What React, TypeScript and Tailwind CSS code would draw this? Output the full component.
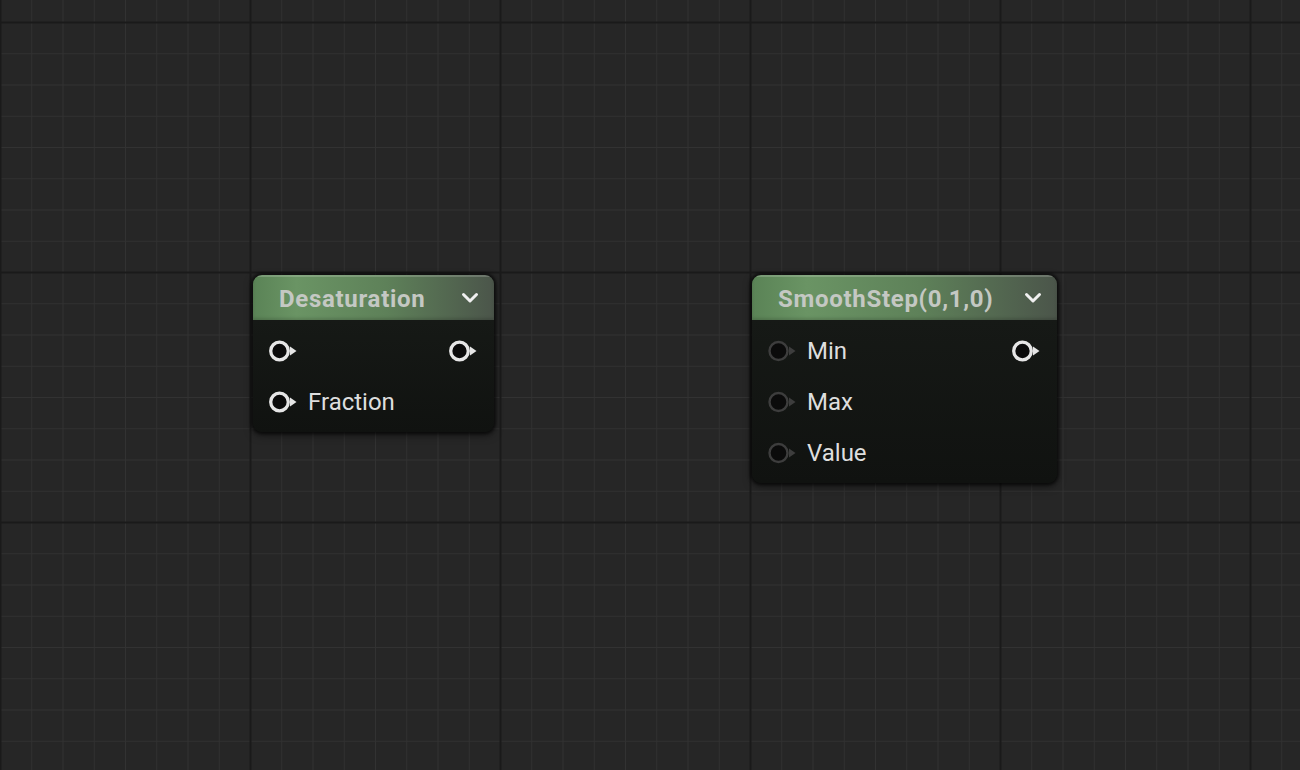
import React from 'react';

type Pin = { label?: string; dim?: boolean };

type NodeDef = {
  title: string;
  left: number;
  top: number;
  width: number;
  rows: { input: Pin; output?: Pin }[];
};

const nodes: NodeDef[] = [
  {
    title: 'Desaturation',
    left: 253,
    top: 275,
    width: 241,
    rows: [{ input: {}, output: {} }, { input: { label: 'Fraction' } }],
  },
  {
    title: 'SmoothStep(0,1,0)',
    left: 752,
    top: 275,
    width: 305,
    rows: [
      { input: { label: 'Min', dim: true }, output: {} },
      { input: { label: 'Max', dim: true } },
      { input: { label: 'Value', dim: true } },
    ],
  },
];

function Grid() {
  const minor = 31.25;
  const vx: number[] = [];
  for (let k = 0; k * minor <= 1300; k++) vx.push(k);
  const hy: number[] = [];
  for (let k = -1; 22 + k * minor <= 770; k++) hy.push(k);
  return (
    <svg className="absolute inset-0" width="1300" height="770">
      <rect width="1300" height="770" fill="#262626" />
      {vx.map((k) =>
        k % 8 === 0 ? null : (
          <rect key={'v' + k} x={k * minor} y={0} width={1} height={770} fill="#323232" />
        ),
      )}
      {hy.map((k) =>
        k % 8 === 0 ? null : (
          <rect key={'h' + k} x={0} y={22 + k * minor} width={1300} height={1} fill="#323232" />
        ),
      )}
      {vx
        .filter((k) => k % 8 === 0)
        .map((k) => (
          <rect key={'V' + k} x={k * minor - 0.5} y={0} width={2} height={770} fill="#1a1a1a" />
        ))}
      {hy
        .filter((k) => k % 8 === 0)
        .map((k) => (
          <rect key={'H' + k} x={0} y={21.5 + k * minor} width={1300} height={2} fill="#1a1a1a" />
        ))}
    </svg>
  );
}

function PinIcon({ dim }: { dim?: boolean }) {
  const c = dim ? '#3d3d3d' : '#e6e6e6';
  return (
    <svg width="30" height="24" viewBox="0 0 30 24" className="shrink-0">
      <circle cx="11.5" cy="12" r={dim ? 9 : 8.8} fill="#0b0b0b" stroke={c} strokeWidth={dim ? 2.4 : 3.3} />
      <path d="M22 7.5 L28.5 12 L22 16.5 Z" fill={c} />
    </svg>
  );
}

function Chevron() {
  return (
    <svg width="18" height="12" viewBox="0 0 18 12">
      <path d="M2.5 2.5 L9 9 L15.5 2.5" fill="none" stroke="#f0f0f0" strokeWidth="3" strokeLinecap="round" strokeLinejoin="round" />
    </svg>
  );
}

function GraphNode({ node }: { node: NodeDef }) {
  return (
    <div
      className="absolute rounded-[9px] bg-[#111311] shadow-[0_0_3px_2px_rgba(0,0,0,0.55),0_3px_8px_rgba(0,0,0,0.5)] overflow-hidden"
      style={{ left: node.left, top: node.top, width: node.width }}
    >
      <div className="relative h-[45px] flex items-center justify-between pl-[26px] pr-[15px] bg-[linear-gradient(90deg,#5a8356_0%,#6a9464_18%,#5e8159_55%,#4b554a_100%)] shadow-[inset_0_2px_0_rgba(255,255,255,0.18),inset_0_-2px_3px_rgba(0,0,0,0.15)]">
        <span className="text-[24px] font-bold leading-none text-[#c4c8c3] tracking-[0.7px] pt-[3px]">{node.title}</span>
        <Chevron />
      </div>
      <div className="py-[5px] bg-[linear-gradient(180deg,#161916_0%,#101210_100%)]">
        {node.rows.map((row, i) => (
          <div key={i} className="h-[51px] flex items-center justify-between pl-[15px] pr-[16px]">
            <div className="flex items-center gap-[10px]">
              <PinIcon dim={row.input.dim} />
              {row.input.label && (
                <span className="text-[24px] leading-none text-[#dedede]">{row.input.label}</span>
              )}
            </div>
            {row.output && <PinIcon dim={row.output.dim} />}
          </div>
        ))}
      </div>
    </div>
  );
}

export default function App() {
  return (
    <div className="relative w-[1300px] h-[770px] overflow-hidden bg-[#262626] font-['Roboto',_'Liberation_Sans',_sans-serif]">
      <Grid />
      {nodes.map((n) => (
        <GraphNode key={n.title} node={n} />
      ))}
    </div>
  );
}
